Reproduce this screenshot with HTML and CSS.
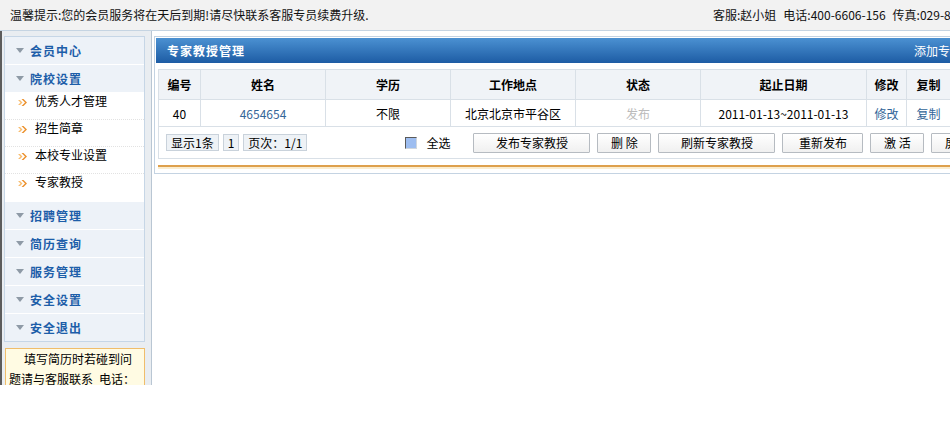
FILE: index.html
```html
<!DOCTYPE html>
<html lang="zh-CN">
<head>
  <meta charset="UTF-8" />
  <title>专家教授管理</title>
  <link rel="stylesheet" href="styles.css">
</head>
<body>
  <div class="topbar">
    <span class="tip">温馨提示:您的会员服务将在天后到期!请尽快联系客服专员续费升级.</span>
    <span class="contact"><span>客服:赵小姐</span><span>电话:400-6606-156</span><span>传真:029-8</span></span>
  </div>

  <div class="frame">
    <aside class="side">
      <div class="menu">
        <div class="menu-head"><i class="caret"></i>会员中心</div>
        <div class="menu-head"><i class="caret"></i>院校设置</div>
        <ul class="submenu">
          <li><svg class="arrow" viewBox="0 0 9 7" width="9" height="7"><path d="M0 1h2l2.5 2.5L2 6H0l2.5-2.5z" fill="#f8bd70"/><path d="M3.5 0h2L9 3.5 5.5 7h-2L7 3.5z" fill="#ec922e"/></svg>优秀人才管理</li>
          <li><svg class="arrow" viewBox="0 0 9 7" width="9" height="7"><path d="M0 1h2l2.5 2.5L2 6H0l2.5-2.5z" fill="#f8bd70"/><path d="M3.5 0h2L9 3.5 5.5 7h-2L7 3.5z" fill="#ec922e"/></svg>招生简章</li>
          <li><svg class="arrow" viewBox="0 0 9 7" width="9" height="7"><path d="M0 1h2l2.5 2.5L2 6H0l2.5-2.5z" fill="#f8bd70"/><path d="M3.5 0h2L9 3.5 5.5 7h-2L7 3.5z" fill="#ec922e"/></svg>本校专业设置</li>
          <li><svg class="arrow" viewBox="0 0 9 7" width="9" height="7"><path d="M0 1h2l2.5 2.5L2 6H0l2.5-2.5z" fill="#f8bd70"/><path d="M3.5 0h2L9 3.5 5.5 7h-2L7 3.5z" fill="#ec922e"/></svg>专家教授</li>
        </ul>
        <div class="menu-head"><i class="caret"></i>招聘管理</div>
        <div class="menu-head"><i class="caret"></i>简历查询</div>
        <div class="menu-head"><i class="caret"></i>服务管理</div>
        <div class="menu-head"><i class="caret"></i>安全设置</div>
        <div class="menu-head"><i class="caret"></i>安全退出</div>
      </div>
      <div class="notice">填写简历时若碰到问题请与客服联系&ensp;电话：400-6606-156</div>
    </aside>

    <main class="main">
      <div class="panel">
        <div class="panel-title">
          <h3>专家教授管理</h3>
          <a href="#">添加专家教授</a>
        </div>

        <table class="grid">
          <colgroup>
            <col class="c-id"><col class="c-std"><col class="c-std"><col class="c-std"><col class="c-std"><col class="c-date"><col class="c-op"><col class="c-op2"><col class="c-op2">
          </colgroup>
          <tr>
            <th>编号</th><th>姓名</th><th>学历</th><th>工作地点</th><th>状态</th><th>起止日期</th><th>修改</th><th>复制</th><th>删除</th>
          </tr>
          <tr>
            <td>40</td>
            <td><a href="#">4654654</a></td>
            <td>不限</td>
            <td>北京北京市平谷区</td>
            <td class="muted">发布</td>
            <td>2011-01-13~2011-01-13</td>
            <td><a href="#">修改</a></td>
            <td><a href="#">复制</a></td>
            <td><a href="#">删除</a></td>
          </tr>
        </table>

        <div class="toolbar">
          <div class="pager">
            <span>显示1条</span><span>1</span><span>页次：1/1</span>
          </div>
          <label class="check-all"><i class="box"></i>全选</label>
          <button class="btn btn-wide">发布专家教授</button>
          <button class="btn btn-small">删 除</button>
          <button class="btn btn-wide">刷新专家教授</button>
          <button class="btn btn-mid">重新发布</button>
          <button class="btn btn-small">激 活</button>
          <button class="btn btn-small">屏 蔽</button>
        </div>

        <div class="panel-line"></div>
      </div>
    </main>
  </div>
</body>
</html>
```

FILE: styles.css
```css
* {
  box-sizing: border-box;
}

html, body {
  margin: 0;
  padding: 0;
  overflow: hidden;
  background: #fff;
}

body {
  width: 950px;
  height: 441px;
  font-family: "Noto Sans CJK SC", sans-serif;
  font-size: 12px;
  color: #000;
}

a {
  color: #336699;
  text-decoration: none;
}

/* top notice bar */
.topbar {
  display: flex;
  height: 31px;
  line-height: 29px;
  background: #f2f2f2;
  border-bottom: 1px solid #c5d4e2;
  white-space: nowrap;
  color: #111;
}

.tip {
  flex: none;
  width: 713px;
  padding-left: 10px;
}

.contact span {
  margin-right: 7px;
}

/* frame below the bar */
.frame {
  display: flex;
  height: 354px;
  overflow: hidden;
}

.side {
  flex: none;
  width: 151px;
  background: #e9edf1;
  border-left: 2px solid #5c5c5c;
  padding: 5px 6px 0 2px;
}

.menu {
  border: 1px solid #c6d6e6;
  background: #edf2f8;
}

.menu-head {
  display: flex;
  align-items: center;
  height: 28px;
  padding-left: 11px;
  border-bottom: 1px solid #fff;
  color: #1d5ea9;
  font-weight: bold;
  letter-spacing: 1px;
}

.menu-head:last-child {
  border-bottom: none;
  height: 27px;
}

.caret {
  width: 0;
  height: 0;
  border-left: 4px solid transparent;
  border-right: 4px solid transparent;
  border-top: 5px solid #8e9aa6;
  margin-right: 6px;
}

.submenu {
  list-style: none;
  margin: 0;
  padding: 0;
  background: #fff;
  border-bottom: 1px solid #fff;
}

.submenu li {
  height: 27px;
  line-height: 16px;
  padding-left: 13px;
  border-bottom: 1px dotted #e2e2e2;
}

.submenu li:last-child {
  border-bottom: none;
}

.arrow {
  vertical-align: 0;
  margin-right: 8px;
}

.notice {
  margin: 6px 0 0 1px;
  padding: 0 3px;
  border: 1px solid #f0bd6a;
  background: #fffbe3;
  line-height: 20px;
  text-indent: 15px;
}

/* main content */
.main {
  flex: 1;
  min-width: 0;
  border-left: 1px solid #b9c6d3;
  padding: 5px 0 0 2px;
  background: #fff;
}

.panel {
  width: 844px;
  border: 1px solid #c4d3e2;
  padding: 1px 1px 4px;
}

.panel-title {
  display: flex;
  justify-content: space-between;
  align-items: center;
  height: 25px;
  padding: 0 10px 0 11px;
  background: linear-gradient(#4b91d2, #1d5ca4);
  color: #fff;
}

.panel-title h3 {
  margin: 0;
  font-size: 12px;
  font-weight: bold;
  letter-spacing: 1px;
}

.panel-title a {
  color: #fff;
}

.grid {
  width: 836px;
  margin: 6px 2px 0;
  border-collapse: collapse;
  table-layout: fixed;
}

.c-id { width: 42px; }
.c-std { width: 125px; }
.c-date { width: 166px; }
.c-op { width: 40px; }
.c-op2 { width: 44px; }

.grid th,
.grid td {
  border: 1px solid #d9e0e7;
  text-align: center;
  padding: 0;
  white-space: nowrap;
}

.grid th {
  height: 30px;
  background: #f0f3f7;
  font-weight: bold;
}

.grid td {
  height: 27px;
}

.grid .muted {
  color: #bbb;
}

.toolbar {
  display: flex;
  align-items: center;
  width: 836px;
  height: 32px;
  margin: 0 2px;
  padding-left: 7px;
  border: 1px solid #d9e0e7;
  border-top: none;
  white-space: nowrap;
}

.pager {
  display: flex;
}

.pager span {
  height: 17px;
  line-height: 15px;
  padding: 0 4px;
  margin-right: 4px;
  border: 1px solid #c9d2db;
  background: #eef2f6;
}

.check-all {
  display: flex;
  align-items: center;
  margin-left: 94px;
  margin-right: 23px;
}

.box {
  width: 12px;
  height: 12px;
  margin-right: 9px;
  background: #9dbdf0;
  border: 1px solid #cfd6de;
  border-top-color: #5a5a5a;
  border-left-color: #5a5a5a;
}

.btn {
  flex: none;
  height: 20px;
  padding: 0;
  margin-right: 7px;
  font: inherit;
  color: #000;
  border: 1px solid #b6bbc1;
  border-radius: 1px;
  background: linear-gradient(#ffffff, #f0f0f0);
}

.btn-wide { width: 117px; }
.btn-mid { width: 81px; }
.btn-small { width: 54px; }

.panel-line {
  height: 4px;
  margin: 6px 2px 0;
  border-top: 2px solid #dea04c;
  background: #fbedcf;
}
```
